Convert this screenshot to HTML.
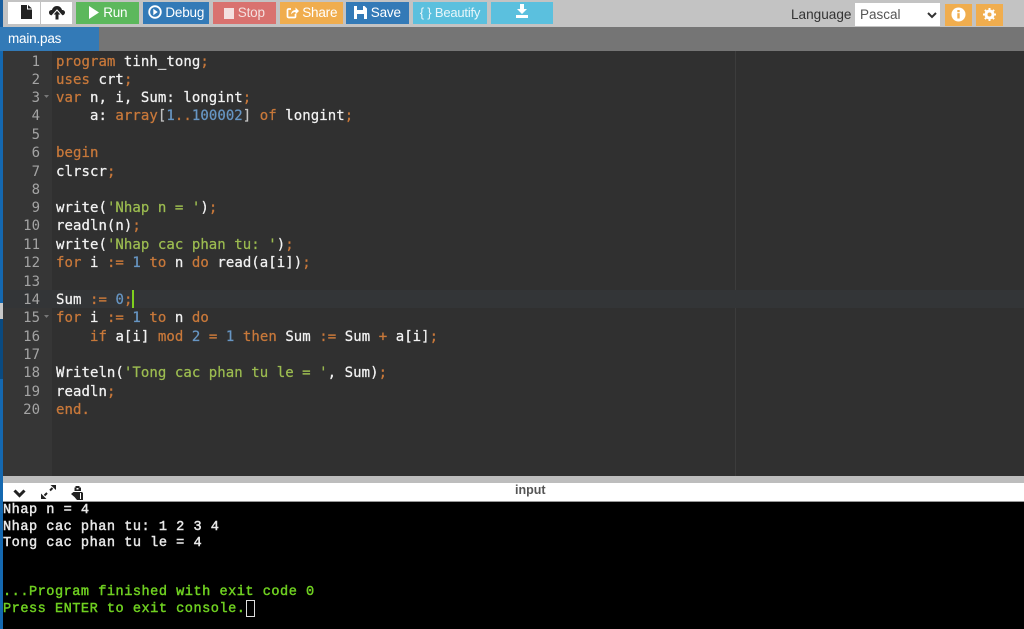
<!DOCTYPE html>
<html><head><meta charset="utf-8">
<style>
*{box-sizing:border-box}
html,body{margin:0;padding:0;width:1024px;height:629px;overflow:hidden;background:#000}
body{position:relative;font-family:"Liberation Sans",sans-serif}
.a{position:absolute}
.btn{position:absolute;top:2px;height:22px;color:#fff;font-size:13.5px;line-height:21px;text-align:center;white-space:nowrap;letter-spacing:-.2px}
.btn svg{vertical-align:-2px}
.ln{position:absolute;left:3px;width:37px;text-align:right;color:#a4a4a4;font:14px/18px "DejaVu Sans Mono",monospace;height:18px;margin-top:1px}
.c{position:absolute;left:56px;height:18px;margin-top:1px;color:#f2f2f2;font:14px/18px "DejaVu Sans Mono",monospace;letter-spacing:.06px;white-space:pre;-webkit-text-stroke:.25px currentColor}
.k{color:#c8783a}.n{color:#6796c4}.s{color:#9cbc50}.p{color:#c4c4c4}
.o{position:absolute;left:3px;font:13.6px/16px "Liberation Mono",monospace;letter-spacing:.5px;margin-top:2px;color:#e8e8e8;white-space:pre;-webkit-text-stroke:.45px currentColor}
.g{color:#6fd021}
</style></head><body>
<div class="a" style="left:0;top:0;width:3px;height:629px;background:#1468b0"></div>
<div class="a" style="left:0;top:0;width:3px;height:51px;background:#1a5f9f"></div>
<div class="a" style="left:0;top:303px;width:3px;height:16px;background:#c8c8c8"></div>
<div class="a" style="left:0;top:319px;width:3px;height:60px;background:#0a4a80"></div>
<div class="a" style="left:3px;top:0;width:1021px;height:27px;background:#c3c3c3"></div>
<div class="a" style="left:8px;top:2px;width:32px;height:22px;background:#fff"></div>
<div class="a" style="left:41px;top:2px;width:31px;height:22px;background:#fff"></div>
<svg class="a" style="left:21px;top:5px" width="11" height="14" viewBox="0 0 11 14"><path d="M0 0h6v4.500h5V14H0z" fill="#222"/><path d="M7 0l4 3.500H7z" fill="#222"/></svg>
<svg class="a" style="left:49px;top:6px" width="16" height="14" viewBox="0 0 16 14"><path d="M3.500 9.500C1.500 9.500 0 8.300 0 6.500S1.300 4 3 4C3.500 1.700 5.500 0 8 0s4.500 1.700 5 4c1.700 0 3 1 3 2.500s-1.500 3-3.500 3z" fill="#222"/><path d="M8 4l4.500 5H10v5H6V9H3.500z" fill="#222" stroke="#fff" stroke-width="1"/></svg>
<div class="btn" style="left:76px;width:63px;background:#5cb85c"><svg width="12" height="13" viewBox="0 0 12 13"><path d="M1 0l10 6.500L1 13z" fill="#fff"/></svg> Run</div>
<div class="btn" style="left:143px;width:66px;background:#337ab7"><svg width="14" height="14" viewBox="0 0 14 14"><circle cx="7" cy="7" r="5.800" fill="none" stroke="#fff" stroke-width="1.800"/><path d="M5.300 3.800l4.400 3.200-4.400 3.200z" fill="#fff"/></svg> Debug</div>
<div class="btn" style="left:213px;width:63px;background:#d9726f;color:#f4e0df"><svg width="10" height="11" viewBox="0 0 10 11"><rect width="10" height="11" fill="#f4e0df"/></svg> Stop</div>
<div class="btn" style="left:280px;width:63px;background:#f0ad4e"><svg width="13" height="13" viewBox="0 0 13 13"><path d="M9.500 8v2.500a1 1 0 0 1-1 1H2.500a1 1 0 0 1-1-1V4a1 1 0 0 1 1-1H5" fill="none" stroke="#fff" stroke-width="1.700"/><path d="M5 8.500C5.300 5.500 7.300 4 9.500 4V1.500L13 5l-3.500 3.500V6C7.800 6 6.300 6.800 5 8.500z" fill="#fff"/></svg> Share</div>
<div class="btn" style="left:346px;width:63px;background:#337ab7"><svg width="13" height="13" viewBox="0 0 13 13"><path d="M0 0h10.500L13 2.500V13H0z" fill="#fff"/><rect x="3" y="0" width="6" height="4" fill="#337ab7"/><rect x="3" y="8" width="7" height="5" fill="#337ab7"/></svg> Save</div>
<div class="btn" style="left:413px;width:74px;background:#5bc0de;color:#e8f6fa;font-size:13px">{ } Beautify</div>
<div class="btn" style="left:491px;width:62px;background:#5bc0de"><svg width="14" height="14" viewBox="0 0 14 14" style="vertical-align:-1px"><path d="M5 0h4v5h3L7 10 2 5h3z" fill="#fff"/><rect x="1" y="11" width="12" height="3" fill="#fff"/></svg></div>
<div class="a" style="left:791px;top:6px;font-size:13.6px;line-height:17px;color:#333">Language</div>
<div class="a" style="left:855px;top:3px;width:85px;height:23px;background:#fff;color:#555;font-size:13.5px;line-height:23px;padding-left:5px">Pascal</div>
<svg class="a" style="left:927px;top:12px" width="10" height="7" viewBox="0 0 10 7"><path d="M1 1l4 4 4-4" fill="none" stroke="#333" stroke-width="2"/></svg>
<div class="a" style="left:945px;top:4px;width:27px;height:22px;background:#f0ad4e"></div>
<svg class="a" style="left:951px;top:7px" width="15" height="15" viewBox="0 0 15 15"><circle cx="7.500" cy="7.500" r="7" fill="#fff"/><rect x="6.300" y="3" width="2.400" height="2.200" fill="#f0ad4e"/><rect x="6.300" y="6.200" width="2.400" height="5.300" fill="#f0ad4e"/></svg>
<div class="a" style="left:976px;top:4px;width:27px;height:22px;background:#f0ad4e"></div>
<svg class="a" style="left:983px;top:8px" width="13" height="13" viewBox="0 0 13 13"><circle cx="6.500" cy="6.500" r="3.600" fill="none" stroke="#fff" stroke-width="2.800"/><path d="M6.500 0v13M0 6.500h13M1.900 1.900l9.200 9.200M11.100 1.900l-9.200 9.200" stroke="#fff" stroke-width="2"/><circle cx="6.500" cy="6.500" r="2" fill="#f0ad4e"/></svg>
<div class="a" style="left:3px;top:27px;width:1021px;height:24px;background:#757575"></div>
<div class="a" style="left:0;top:27px;width:99px;height:24px;background:#337ab7;color:#fff;font-size:13.5px;line-height:23px;padding-left:8px;letter-spacing:-.2px">main.pas</div>
<div class="a" style="left:3px;top:51px;width:1021px;height:425px;background:#303030"></div>
<div class="a" style="left:3px;top:51px;width:49px;height:425px;background:#363636"></div>
<div class="a" style="left:735px;top:51px;width:1px;height:425px;background:#3c3c3c"></div>
<div class="a" style="left:3px;top:290px;width:1021px;height:18px;background:#333537"></div>
<div class="a" style="left:132px;top:290px;width:2px;height:18px;background:#7fd01e"></div>

<div class="ln" style="top:52px">1</div><div class="c" style="top:52px"><span class="k">program</span> tinh_tong<span class="k">;</span></div>
<div class="ln" style="top:70px">2</div><div class="c" style="top:70px"><span class="k">uses</span> crt<span class="k">;</span></div>
<div class="ln" style="top:88px">3</div><div class="c" style="top:88px"><span class="k">var</span> n, i, Sum: longint<span class="k">;</span></div>
<div class="ln" style="top:106px">4</div><div class="c" style="top:106px">    a: <span class="k">array</span><span class="p">[</span><span class="n">1</span><span class="k">..</span><span class="n">100002</span><span class="p">]</span> <span class="k">of</span> longint<span class="k">;</span></div>
<div class="ln" style="top:125px">5</div>
<div class="ln" style="top:143px">6</div><div class="c" style="top:143px"><span class="k">begin</span></div>
<div class="ln" style="top:162px">7</div><div class="c" style="top:162px">clrscr<span class="k">;</span></div>
<div class="ln" style="top:180px">8</div>
<div class="ln" style="top:198px">9</div><div class="c" style="top:198px">write(<span class="s">'Nhap n = '</span>)<span class="k">;</span></div>
<div class="ln" style="top:216px">10</div><div class="c" style="top:216px">readln(n)<span class="k">;</span></div>
<div class="ln" style="top:235px">11</div><div class="c" style="top:235px">write(<span class="s">'Nhap cac phan tu: '</span>)<span class="k">;</span></div>
<div class="ln" style="top:253px">12</div><div class="c" style="top:253px"><span class="k">for</span> i <span class="k">:=</span> <span class="n">1</span> <span class="k">to</span> n <span class="k">do</span> read(a[i])<span class="k">;</span></div>
<div class="ln" style="top:272px">13</div>
<div class="ln" style="top:290px">14</div><div class="c" style="top:290px">Sum <span class="k">:=</span> <span class="n">0</span><span class="k">;</span></div>
<div class="ln" style="top:308px">15</div><div class="c" style="top:308px"><span class="k">for</span> i <span class="k">:=</span> <span class="n">1</span> <span class="k">to</span> n <span class="k">do</span></div>
<div class="ln" style="top:327px">16</div><div class="c" style="top:327px">    <span class="k">if</span> a[i] <span class="k">mod</span> <span class="n">2</span> <span class="k">=</span> <span class="n">1</span> <span class="k">then</span> Sum <span class="k">:=</span> Sum <span class="k">+</span> a[i]<span class="k">;</span></div>
<div class="ln" style="top:345px">17</div>
<div class="ln" style="top:363px">18</div><div class="c" style="top:363px">Writeln(<span class="s">'Tong cac phan tu le = '</span>, Sum)<span class="k">;</span></div>
<div class="ln" style="top:382px">19</div><div class="c" style="top:382px">readln<span class="k">;</span></div>
<div class="ln" style="top:400px">20</div><div class="c" style="top:400px"><span class="k">end.</span></div>
<svg class="a" style="left:44px;top:95px" width="5" height="4"><path d="M0 0h5L2.500 3z" fill="#777"/></svg>
<svg class="a" style="left:44px;top:315px" width="5" height="4"><path d="M0 0h5L2.500 3z" fill="#777"/></svg>

<div class="a" style="left:3px;top:476px;width:1021px;height:7px;background:#bdbdbd"></div>
<div class="a" style="left:3px;top:483px;width:1021px;height:19px;background:#fff;border-bottom:1px solid #999"></div>
<div class="a" style="left:515px;top:482px;font-size:12.5px;font-weight:bold;line-height:16px;color:#555">input</div>
<svg class="a" style="left:13px;top:489px" width="13" height="9" viewBox="0 0 13 9"><path d="M1.500 1.500L6.500 6.500 11.500 1.500" fill="none" stroke="#222" stroke-width="3"/></svg>
<svg class="a" style="left:41px;top:485px" width="15" height="14" viewBox="0 0 15 14"><path d="M9.500 0H15v5zM0 14V8.500L5.500 14z" fill="#222"/><path d="M3.500 10.500L6 8M9 5.500l2.500-2.500" stroke="#222" stroke-width="2"/></svg>
<svg class="a" style="left:71px;top:486px" width="13" height="14" viewBox="0 0 13 14"><path d="M4.500 0h4v1.500H10V5H3.500V1.500h1zM0 8l2.500-2H11l1 1v7H6L3.500 11z" fill="#222"/><rect x="5.500" y="2" width="2" height="1.500" fill="#fff"/><rect x="9" y="7" width="1" height="6" fill="#fff"/></svg>

<div class="o" style="top:501px">Nhap n = 4</div>
<div class="o" style="top:517.500px">Nhap cac phan tu: 1 2 3 4</div>
<div class="o" style="top:534px">Tong cac phan tu le = 4</div>
<div class="o g" style="top:583px">...Program finished with exit code 0</div>
<div class="o g" style="top:599.500px">Press ENTER to exit console.</div>
<div class="a" style="left:246px;top:600px;width:9px;height:17px;border:1px solid #ddd"></div>
</body></html>
